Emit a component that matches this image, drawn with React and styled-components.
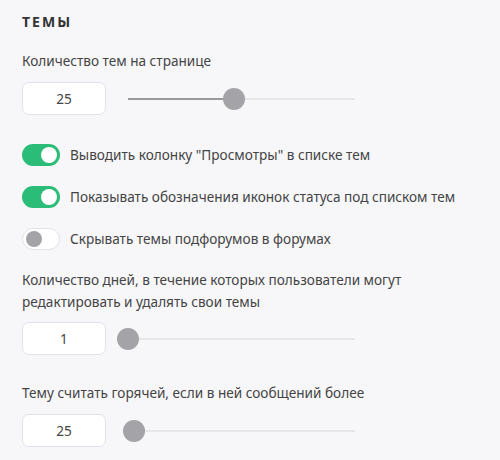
import React from "react";
import styled, { createGlobalStyle } from "styled-components";

const Global = createGlobalStyle`
  html, body { margin: 0; padding: 0; background: #f7f7f9; }
  body { font-family: "Noto Sans", "Open Sans", sans-serif; color: #444; }
`;

const Page = styled.div`
  width: 500px;
  height: 460px;
  box-sizing: border-box;
  padding: 12px 22px 0 22px;
  background: #f7f7f9;
  overflow: hidden;
`;

const Title = styled.h2`
  margin: 0;
  font-size: 14px;
  line-height: 20px;
  font-weight: 700;
  letter-spacing: 2px;
  color: #333;
`;

const Label = styled.div`
  margin-top: ${(p) => p.$mt}px;
  font-size: 13.6px;
  line-height: 22px;
  color: #444;
  max-width: ${(p) => p.$maxw || 450}px;
`;

const InputRow = styled.div`
  display: flex;
  align-items: center;
  gap: 22px;
  margin-top: ${(p) => p.$mt ?? 10}px;
`;

const NumberBox = styled.div`
  width: 84px;
  height: 33px;
  box-sizing: border-box;
  border: 1.5px solid #dfe2ea;
  border-radius: 7px;
  background: #fff;
  display: flex;
  align-items: center;
  justify-content: center;
  font-size: 13.6px;
  color: #444;
`;

const Track = styled.div`
  position: relative;
  width: 227px;
  height: 2px;
  background: #e7e7eb;
`;

const Fill = styled.div`
  position: absolute;
  left: 0;
  top: 0;
  height: 2px;
  background: #9a9a9e;
`;

const Thumb = styled.div`
  position: absolute;
  top: 50%;
  width: 22px;
  height: 22px;
  border-radius: 50%;
  background: #a4a4a8;
  transform: translate(-50%, -50%);
`;

const Toggles = styled.div`
  display: flex;
  flex-direction: column;
  gap: 20px;
  margin-top: 29px;
`;

const ToggleRow = styled.div`
  display: flex;
  align-items: center;
  gap: 10px;
  font-size: 13.6px;
  line-height: 22px;
  color: #444;
`;

const Switch = styled.div`
  width: 38px;
  height: 22px;
  box-sizing: border-box;
  border-radius: 11px;
  background: ${(p) => (p.$on ? "#2bbd77" : "#fff")};
  border: ${(p) => (p.$on ? "none" : "1.5px solid #e3e3e7")};
  display: flex;
  align-items: center;
  justify-content: ${(p) => (p.$on ? "flex-end" : "flex-start")};
  padding: 0 3px;
  flex-shrink: 0;
`;

const Knob = styled.div`
  width: 16px;
  height: 16px;
  border-radius: 50%;
  background: ${(p) => (p.$on ? "#fff" : "#a4a4a8")};
`;

function Slider({ pct }) {
  return (
    <Track>
      <Fill style={{ width: `${pct}%` }} />
      <Thumb style={{ left: `${pct}%` }} />
    </Track>
  );
}

function Toggle({ on, children }) {
  return (
    <ToggleRow>
      <Switch $on={on}>
        <Knob $on={on} />
      </Switch>
      <span>{children}</span>
    </ToggleRow>
  );
}

export default function App() {
  return (
    <Page>
      <Global />
      <Title>ТЕМЫ</Title>
      <Label $mt={18}>Количество тем на странице</Label>
      <InputRow>
        <NumberBox>25</NumberBox>
        <Slider pct={46.7} />
      </InputRow>
      <Toggles>
        <Toggle on>Выводить колонку "Просмотры" в списке тем</Toggle>
        <Toggle on>Показывать обозначения иконок статуса под списком тем</Toggle>
        <Toggle on={false}>Скрывать темы подфорумов в форумах</Toggle>
      </Toggles>
      <Label $mt={19} $maxw={420}>
        Количество дней, в течение которых пользователи могут редактировать и удалять свои темы
      </Label>
      <InputRow $mt={9}>
        <NumberBox>1</NumberBox>
        <Slider pct={0} />
      </InputRow>
      <Label $mt={27}>Тему считать горячей, если в ней сообщений более</Label>
      <InputRow>
        <NumberBox>25</NumberBox>
        <Slider pct={2.6} />
      </InputRow>
    </Page>
  );
}
